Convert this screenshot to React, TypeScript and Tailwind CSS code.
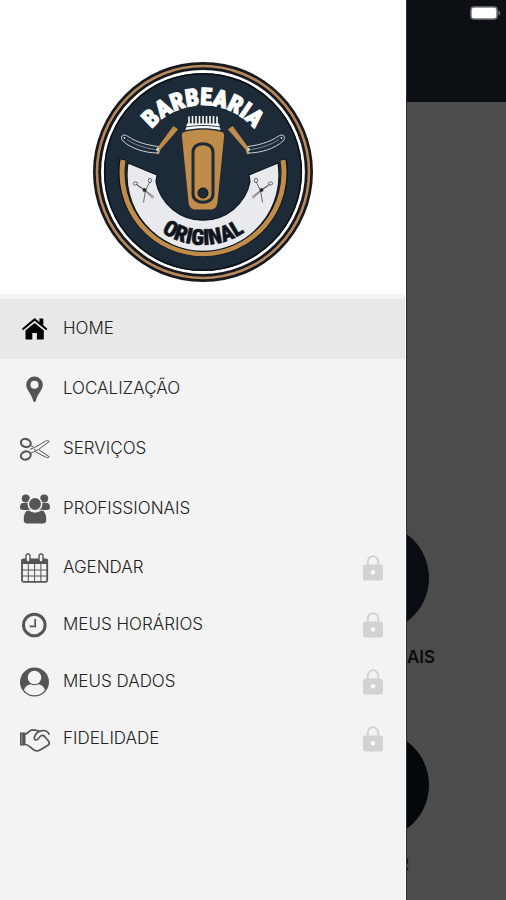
interface MenuItem {
  label: string;
  icon: React.ReactNode;
  active?: boolean;
  locked?: boolean;
}

const HomeIcon = () => (
  <svg viewBox="0 0 30 30" className="size-[30px]" fill="currentColor">
    <path d="M19.500 4.500h3.800v7.500l-3.800-3.200z" />
    <path d="M14.600 9l9.200 7.500v8c0 .6-.4 1-1 1h-5.900V19h-4.600v6.500H6.500c-.6 0-1-.4-1-1v-8z" />
    <path d="M2.500 15.500L14.600 5.400l12.200 10.100" fill="none" stroke="currentColor" strokeWidth="2" />
  </svg>
);

const PinIcon = () => (
  <svg viewBox="0 0 30 30" className="size-[30px]" fill="currentColor" fillRule="evenodd">
    <path d="M14.500 2.500a8.300 8.300 0 0 0-8.300 8.300C6.200 16 11.500 19.500 13.200 27c.4 1.400 2.200 1.400 2.600 0C17.500 19.500 22.800 16 22.800 10.800A8.300 8.300 0 0 0 14.500 2.500zm0 4.200a4 4 0 1 1 0 8 4 4 0 0 1 0-8z" />
  </svg>
);

const ScissorsIcon = () => (
  <svg viewBox="0 0 30 30" className="size-[30px]" fill="none" stroke="currentColor">
    <ellipse cx="5.800" cy="9" rx="5" ry="4" strokeWidth="2" transform="rotate(20 5.800 9)" />
    <ellipse cx="5.800" cy="21.500" rx="5" ry="4" strokeWidth="2" transform="rotate(-20 5.800 21.500)" />
    <path d="M10.500 11.500l4 2.200L25.500 7.200c1.500-.9 3-.5 3.800.3L18.500 15.500l10.800 7.300c-1 1-2.400 1.100-3.800.3L14.500 17.300l-4.200 2.200M10 15.300l3.500-1.300M14.500 17.300l4-1.800" strokeWidth="1" />
    <circle cx="14.800" cy="15.500" r=".7" fill="currentColor" stroke="none" />
  </svg>
);

const PeopleIcon = () => (
  <svg viewBox="0 0 30 30" className="size-[30px]" fill="currentColor">
    <circle cx="5.800" cy="4.500" r="4" />
    <circle cx="24.200" cy="4.500" r="4" />
    <path d="M2.500 9h6.800c-.6 3 .2 5 2 7H3c-2 0-3-1-3-2.500 0-2.200.8-4.500 2.500-4.500zM27.500 9h-6.800c.6 3-.2 5-2 7H27c2 0 3-1 3-2.500 0-2.200-.8-4.500-2.500-4.500z" />
    <circle cx="15" cy="10" r="6.700" stroke="#f3f3f3" strokeWidth="1.500" />
    <path d="M9 16c4 2.800 8 2.800 12 0 4 0 5.800 4.500 5.800 10 0 2.500-1.800 4-4 4H7.200c-2.200 0-4-1.500-4-4 0-5.500 1.800-10 5.800-10z" stroke="#f3f3f3" strokeWidth="1" />
  </svg>
);

const CalendarIcon = () => (
  <svg viewBox="0 0 30 30" className="size-[30px]" fill="none" stroke="currentColor">
    <rect x="2" y="6.500" width="25.200" height="22.300" rx="1.500" strokeWidth="1.800" />
    <path d="M1.500 6h26v5h-26z" fill="currentColor" stroke="none" />
    <path d="M8.300 11v18M14.600 11v18M20.900 11v18M2 17h25M2 23h25" strokeWidth="1" />
    <rect x="6" y="1" width="4" height="8" rx="2" fill="#f3f3f3" strokeWidth="1.400" />
    <rect x="19" y="1" width="4" height="8" rx="2" fill="#f3f3f3" strokeWidth="1.400" />
  </svg>
);

const ClockIcon = () => (
  <svg viewBox="0 0 30 30" className="size-[30px]" fill="none" stroke="currentColor">
    <circle cx="14.300" cy="15" r="10.800" strokeWidth="3" />
    <path d="M15.200 9v7.300h-5.500" strokeWidth="1.700" />
  </svg>
);

const UserIcon = () => (
  <svg viewBox="0 0 30 30" className="size-[30px]">
    <circle cx="14.500" cy="15" r="14.500" fill="currentColor" />
    <circle cx="14.500" cy="10.500" r="6.800" fill="#f3f3f3" />
    <path d="M4 23c1.500-4 4-5.300 6.700-5.700 2.500 1.200 5.100 1.200 7.600 0 2.700.4 5.200 1.700 6.700 5.700A13 13 0 0 1 4 23z" fill="#f3f3f3" />
  </svg>
);

const HandIcon = () => (
  <svg viewBox="0 0 30 30" className="size-[30px]" fill="none" stroke="currentColor" strokeLinejoin="round" strokeLinecap="round">
    <path d="M0 8.500h5.500v13H0z" fill="currentColor" stroke="none" />
    <path d="M1.800 10.500v9" stroke="#9a9a9a" strokeWidth="1" />
    <path d="M6 10l4-3.200c1.200-1 4-1.300 7-.3l1.500.6M6 20.500c3 .5 4.500 3.500 8.500 5.800 2 1.200 3.500.9 5.500-.3l8-4.800c1.700-1.200 1.500-3 .3-4.500l-4.300-5" strokeWidth="1.700" />
    <path d="M29 10c-1.500-3-4.500-4-8-3.200-3.500.7-5.500 3-6.500 6-.6 2 .4 3.300 2 3.200 2.300-.2 2.500-3.300 4.500-4.300 1-.4 2.200-.2 3 .3" strokeWidth="1.700" />
  </svg>
);

const LockIcon = () => (
  <svg viewBox="0 0 20 26" className="h-[26px] w-5 text-[#d2d2d2]" role="img" aria-label="Bloqueado">
    <path d="M4.800 11V6.500a5.200 5.200 0 0 1 10.400 0V11" fill="none" stroke="currentColor" strokeWidth="1.900" />
    <path d="M2.500 9.500h15A2.500 2.500 0 0 1 20 12v11a2.500 2.500 0 0 1-2.500 2.500h-15A2.500 2.500 0 0 1 0 23V12a2.500 2.500 0 0 1 2.500-2.500z" fill="currentColor" />
    <circle cx="10" cy="17.300" r="2.400" fill="#f8f8f8" />
  </svg>
);

const items: MenuItem[] = [
  { label: "HOME", icon: <HomeIcon />, active: true },
  { label: "LOCALIZAÇÃO", icon: <PinIcon /> },
  { label: "SERVIÇOS", icon: <ScissorsIcon /> },
  { label: "PROFISSIONAIS", icon: <PeopleIcon /> },
  { label: "AGENDAR", icon: <CalendarIcon />, locked: true },
  { label: "MEUS HORÁRIOS", icon: <ClockIcon />, locked: true },
  { label: "MEUS DADOS", icon: <UserIcon />, locked: true },
  { label: "FIDELIDADE", icon: <HandIcon />, locked: true },
];

const Razor = () => (
  <g>
    <path d="M80.500 64.500l4 3-17.500 20-1.500 4.500-2-1 .5-4z" fill="#c08c4a" stroke="#c08c4a" strokeWidth="1" />
    <path d="M29 74c1.500-1.500 4-1 6 .5 9 6 19 8.500 30 10v6.500c-13 0-27-4.500-35-12-1.500-1.500-2-3.500-1-5z" fill="#1d2b38" stroke="#dde1e5" strokeWidth=".9" />
    <path d="M34 77.500c9 6 18 8.500 28 10" fill="none" stroke="#9ba5ae" strokeWidth=".8" />
    <circle cx="31.500" cy="76" r=".9" fill="#dde1e5" />
    <circle cx="64" cy="87.500" r="1.200" fill="#dde1e5" />
  </g>
);

const SmallScissors = () => (
  <g fill="none" stroke="#34373a" strokeWidth=".7">
    <path d="M43 122l8 5.500 9 9M56.500 120.500l-4 8-2 12M45 124l7 4M53 129l8 6" />
    <ellipse cx="42.500" cy="121.500" rx="2.200" ry="1.600" />
    <ellipse cx="57" cy="118.500" rx="1.600" ry="2.200" />
    <circle cx="51.500" cy="128" r="1.600" fill="#111820" />
  </g>
);

const Logo = () => (
  <svg viewBox="0 0 220 220" className="size-[220px]" role="img" aria-label="Barbearia Original">
    <defs>
      <path id="arc-top" d="M43 110a67 67 0 0 1 134 0" />
      <path id="arc-bottom" d="M37 110a73 73 0 0 0 146 0" />
    </defs>
    <circle cx="110" cy="110" r="110" fill="#17191f" />
    <circle cx="110" cy="110" r="106" fill="none" stroke="#b68a5c" strokeWidth="2.600" />
    <circle cx="110" cy="110" r="100.500" fill="#1d2b38" stroke="#fff" strokeWidth="2.800" />
    <circle cx="110" cy="110" r="98.300" fill="none" stroke="#0b1017" strokeWidth="1.600" />
    <path d="M29.500 97a81.500 81.500 0 1 0 161 0" fill="none" stroke="#0e141d" strokeWidth="7" />
    <path d="M30 98a81 81 0 1 0 160 0" fill="none" stroke="#c08c4a" strokeWidth="5" />
    <path d="M35 101L64 113l-1 7a48 48 0 0 0 94 0l-1-7 29-12a76 76 0 1 1-150 0z" fill="#e9eaee" stroke="#0e141d" strokeWidth="1.200" />
    <text
      fill="#fff"
      stroke="#fff"
      strokeWidth="1"
      textAnchor="middle"
      className="font-['Roboto_Condensed','Roboto',sans-serif] text-[24px] font-black"
    >
      <textPath href="#arc-top" startOffset="50%">BARBEARIA</textPath>
    </text>
    <text
      fill="#10151c"
      stroke="#10151c"
      strokeWidth=".5"
      textAnchor="middle"
      className="font-['Roboto_Condensed','Roboto',sans-serif] text-[22px] font-black"
    >
      <textPath href="#arc-bottom" startOffset="50%">ORIGINAL</textPath>
    </text>
    <Razor />
    <g transform="matrix(-1 0 0 1 220 0)">
      <Razor />
    </g>
    <SmallScissors />
    <g transform="matrix(-1 0 0 1 220 0)">
      <SmallScissors />
    </g>
    <path d="M96 54.500v8M99.500 54v8M103 54v8M106.500 54v8M110 54v8M113.500 54v8M117 54v8M120.500 54v8M124 54.500v8" stroke="#fff" strokeWidth="1.600" />
    <path d="M94 61.500h32l1.500 6.500c-12-2.500-23-2.500-35 0z" fill="#fff" />
    <path d="M93 65c11-2 23-2 34 0" fill="none" stroke="#1d2b38" strokeWidth=".9" />
    <path d="M91 70c13-3.500 25-3.500 38 0 2 .7 2.300 2.500 2 5l-6.500 65c-.5 5-3 7.500-7 7.500h-15c-4 0-6.500-2.500-7-7.500L89 75c-.3-2.500 0-4.300 2-5z" fill="#c08c4a" />
    <path d="M100 90c0-11 20-11 20 0v42c0 11-20 11-20 0z" fill="none" stroke="#1d2b38" strokeWidth="3" />
    <circle cx="110" cy="131" r="5" fill="#1d2b38" stroke="#0b1017" strokeWidth="1" />
  </svg>
);

const MenuRow: React.FC<{ item: MenuItem }> = ({ item }) => (
  <li>
    <button
      type="button"
      className={`flex w-full items-center pl-5 pr-[22px] text-left ${
        item.locked ? "h-[57px]" : "h-[60px]"
      } ${item.active ? "bg-[#e8e8e8] text-black" : "text-[#555]"}`}
    >
      {item.icon}
      <span className="ml-[13px] flex-1 text-[17px] font-light text-[#222]">{item.label}</span>
      {item.locked ? <LockIcon /> : null}
    </button>
  </li>
);

export default function App() {
  return (
    <div className="flex min-h-screen bg-[#4c4c4c] font-['Inter','Liberation_Sans',sans-serif]">
      <aside className="flex flex-1 flex-col border-r border-white bg-[#f3f3f3]">
        <div className="flex justify-center bg-white pb-3 pt-[62px]">
          <Logo />
        </div>
        <nav className="pt-[5px]">
          <ul>
            {items.map((item) => (
              <MenuRow key={item.label} item={item} />
            ))}
          </ul>
        </nav>
      </aside>

      <main className="flex w-[100px] shrink-0 flex-col overflow-hidden border-l border-[#2b2d30]">
        <header className="flex h-[102px] items-start justify-end bg-[#0c0f13] pr-1 pt-1.5">
          <svg viewBox="0 0 32 14" className="h-3.5 w-8" role="img" aria-label="Bateria">
            <rect x="1" y="1" width="26" height="12" rx="3" fill="#fff" stroke="#777" strokeWidth="1.500" />
            <path d="M28.500 4.500c2 .5 2.500 4.500 0 5z" fill="#777" />
          </svg>
        </header>
        <div className="mt-[422px] flex flex-col">
          <div className="-ml-[86px] size-[108px] rounded-full bg-[#0a0d11]" />
          <span className="mt-[13px] text-[17px] font-semibold leading-6 text-[#0c0c0c]">AIS</span>
        </div>
        <div className="mt-[62px] flex flex-col">
          <div className="-ml-[86px] size-[108px] rounded-full bg-[#05080b]" />
          <span className="mt-[13px] flex w-[2px] justify-end overflow-hidden text-[17px] font-semibold leading-6 text-[#0c0c0c]">
            R
          </span>
        </div>
      </main>
    </div>
  );
}
